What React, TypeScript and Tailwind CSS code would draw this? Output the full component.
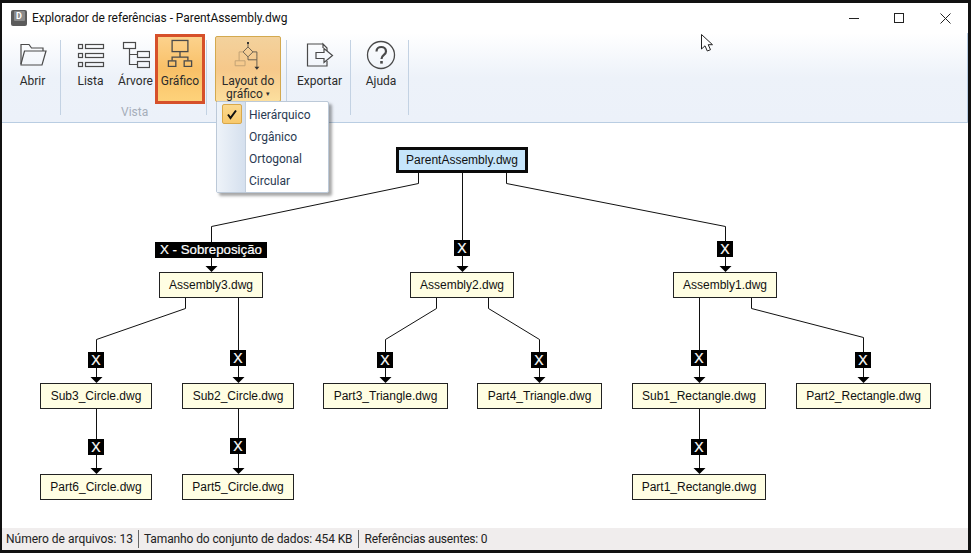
import React from "react";

const OX = 2;
const OY = 123;

type Node = { t: string; x: number; y: number; w: number; root?: boolean };
const nodes: Node[] = [
  { t: "ParentAssembly.dwg", x: 396, y: 147, w: 132, root: true },
  { t: "Assembly3.dwg", x: 159, y: 272, w: 104 },
  { t: "Assembly2.dwg", x: 410, y: 272, w: 104 },
  { t: "Assembly1.dwg", x: 673, y: 272, w: 104 },
  { t: "Sub3_Circle.dwg", x: 40, y: 383, w: 112 },
  { t: "Sub2_Circle.dwg", x: 182, y: 383, w: 112 },
  { t: "Part3_Triangle.dwg", x: 323, y: 383, w: 125 },
  { t: "Part4_Triangle.dwg", x: 477, y: 383, w: 125 },
  { t: "Sub1_Rectangle.dwg", x: 632, y: 383, w: 134 },
  { t: "Part2_Rectangle.dwg", x: 796, y: 383, w: 135 },
  { t: "Part6_Circle.dwg", x: 40, y: 474, w: 112 },
  { t: "Part5_Circle.dwg", x: 182, y: 474, w: 112 },
  { t: "Part1_Rectangle.dwg", x: 632, y: 474, w: 134 },
];

const edges: number[][][] = [
  [[418.5, 173], [418.5, 183.5], [211.5, 226.5], [211.5, 267]],
  [[462.5, 173], [462.5, 267]],
  [[506.5, 173], [506.5, 183.5], [725.5, 226.5], [725.5, 267]],
  [[185.5, 298], [185.5, 308.5], [96.5, 339.5], [96.5, 378]],
  [[238.5, 298], [238.5, 378]],
  [[436.5, 298], [436.5, 308.5], [385.5, 339.5], [385.5, 378]],
  [[488.5, 298], [488.5, 308.5], [539.5, 339.5], [539.5, 378]],
  [[699.5, 298], [699.5, 378]],
  [[751.5, 298], [751.5, 308.5], [863.5, 337.5], [863.5, 378]],
  [[96.5, 409], [96.5, 469]],
  [[238.5, 409], [238.5, 469]],
  [[699.5, 409], [699.5, 469]],
];

const xLabels = [
  [454, 240],
  [717, 241],
  [88, 352],
  [230, 350],
  [377, 352],
  [531, 352],
  [691, 350],
  [855, 352],
  [88, 439],
  [230, 438],
  [691, 439],
];

const S = "#4a4a4a";

function RibbonBtn({ label, w, children }: { label: string; w: string; children: React.ReactNode }) {
  return (
    <div className={`flex flex-col items-center shrink-0 ${w}`}>
      <div className="h-[34px] mt-[5px] flex items-center justify-center">{children}</div>
      <div className="text-[12px] leading-[16px] mt-[1px] text-[#2b2b2b] whitespace-nowrap">{label}</div>
    </div>
  );
}

function Sep({ className }: { className: string }) {
  return <div className={`w-px h-[75px] mt-[7px] bg-[#c3d2e3] shrink-0 ${className}`} />;
}

function TitleIcon() {
  return (
    <div className="w-[16px] h-[16px] rounded-[2px] bg-[#5b5b5b] flex items-start justify-center pt-[1px] shrink-0">
      <div className="w-[11px] h-[10px] bg-[#8b8b8b] rounded-[1px] text-white text-[9px] leading-[10px] font-bold text-center">D</div>
    </div>
  );
}

function Dropdown() {
  const items = ["Hierárquico", "Orgânico", "Ortogonal", "Circular"];
  return (
    <div className="absolute left-[214px] top-[98px] w-[113px] h-[92px] bg-white border border-[#bcc9d8] rounded-[2px] shadow-[3px_3px_3px_rgba(0,0,0,0.35)] z-10 flex">
      <div className="w-[29px] bg-gradient-to-r from-[#eef3f9] to-[#d5e0ee] border-r border-[#c3cfdd] shrink-0" />
      <div className="flex flex-col pl-[3px] pt-[2px]">
        {items.map((t) => (
          <div key={t} className="h-[22px] leading-[22px] text-[12px] text-[#2a3a52] whitespace-nowrap">{t}</div>
        ))}
      </div>
      <div className="absolute left-[5px] top-[2px] w-[20px] h-[20px] rounded-[2px] border border-[#d9a84a] bg-gradient-to-b from-[#fbd98f] to-[#f8c96c] flex items-center justify-center">
        <svg width="12" height="11" viewBox="0 0 12 11"><path d="M2 5.5 L4.5 9 L10 1.5" fill="none" stroke="#111" strokeWidth="2" /></svg>
      </div>
    </div>
  );
}

export default function App() {
  return (
    <div className="w-[971px] h-[553px] flex flex-col bg-white border-t-[3px] border-l-[2px] border-r-[3px] border-b-[3px] border-[#111] overflow-hidden relative font-['Roboto','Open_Sans',sans-serif]">
      {/* Title bar */}
      <div className="h-[30px] flex items-center shrink-0 bg-white">
        <div className="ml-[9px] mr-[5px]"><TitleIcon /></div>
        <div className="text-[12px] text-[#111] whitespace-nowrap tracking-[-0.05px]">Explorador de referências - ParentAssembly.dwg</div>
        <div className="ml-auto flex items-center h-full">
          <svg width="11" height="11" viewBox="0 0 11 11" className="mr-[34px]"><path d="M0 5.5 H10" stroke="#222" strokeWidth="1" /></svg>
          <svg width="11" height="11" viewBox="0 0 11 11" className="mr-[35px]"><rect x="0.5" y="0.5" width="9" height="9" fill="none" stroke="#222" /></svg>
          <svg width="11" height="11" viewBox="0 0 11 11" className="mr-[17px]"><path d="M0.5 0.5 L10.5 10.5 M10.5 0.5 L0.5 10.5" stroke="#222" strokeWidth="1" /></svg>
        </div>
      </div>

      {/* Ribbon */}
      <div className="h-[90px] shrink-0 flex bg-gradient-to-b from-white via-[#edf2f9] via-50% to-[#ecf1f9] border-b border-r border-[#b9cde2] relative">
        <RibbonBtn label="Abrir" w="w-[58px] pl-[3px]">
          <svg width="28" height="26" viewBox="0 0 28 26" fill="none" stroke={S} strokeWidth="1.2">
            <path d="M2 22 V2.5 H10 L12.5 6 H24 V9" />
            <path d="M2 22 L5.5 9 H27 L23 23 H2 Z" />
          </svg>
        </RibbonBtn>
        <Sep className="ml-0" />
        <RibbonBtn label="Lista" w="w-[59px] ml-[0px]">
          <svg width="28" height="26" viewBox="0 0 28 26" fill="none" stroke={S} strokeWidth="1.2">
            <rect x="1.5" y="2.5" width="4" height="4" /><rect x="8.5" y="2.5" width="18" height="4" />
            <rect x="1.5" y="11.5" width="4" height="4" /><rect x="8.5" y="11.5" width="18" height="4" />
            <rect x="1.5" y="20.5" width="4" height="4" /><rect x="8.5" y="20.5" width="18" height="4" />
          </svg>
        </RibbonBtn>
        <RibbonBtn label="Árvore" w="w-[33px] -ml-[1px]">
          <svg width="28" height="28" viewBox="0 0 28 28" fill="none" stroke={S} strokeWidth="1.2">
            <rect x="1.5" y="1.5" width="12" height="6" /><rect x="15.5" y="10.5" width="12" height="6" /><rect x="15.5" y="20.5" width="12" height="6" />
            <path d="M7.5 7.5 V23.5 H15.5 M7.5 13.5 H15.5" />
          </svg>
        </RibbonBtn>
        <div className="w-[50px] h-[70px] ml-[3px] mt-[1px] border-[3px] border-[#d6502a] bg-gradient-to-b from-[#fcd28c] via-[#f9c067] via-50% to-[#fdd27a] shrink-0 flex flex-col items-center">
          <div className="h-[32px] pr-[1px] flex items-center justify-center">
            <svg width="26" height="28" viewBox="0 0 28 30" fill="none" stroke={S} strokeWidth="1.4">
              <rect x="5.5" y="1.5" width="17" height="12" />
              <path d="M14 13.5 V19.5 M5.5 23 V19.5 H22.5 V23" />
              <rect x="1.5" y="23.5" width="8" height="6" /><rect x="18.5" y="23.5" width="8" height="6" />
            </svg>
          </div>
          <div className="text-[12px] leading-[16px] mt-[4px] text-[#2b2b2b] whitespace-nowrap">Gráfico</div>
        </div>
        <Sep className="ml-[1px]" />
        <div className="w-[66px] h-[66px] ml-[8px] mt-[3px] rounded-[2px] border border-[#d3a94f] bg-gradient-to-b from-[#f3d29d] via-[#f6c88a] via-50% to-[#fcdf9e] shrink-0 flex flex-col items-center">
          <svg width="28" height="30" viewBox="0 0 28 30" fill="none" stroke="#6a6050" strokeWidth="1" className="mt-[5px]">
            <path d="M14 1 V5 M9 10 L14 5 L19 10 L14 15 Z M19 10 H23 V15 M14 15 V18 H23 V15 M23 18 V26" />
            <path d="M9 10 H5 V19 M1 19 H11 V24 H1 Z" stroke="#c2a274" />
            <path d="M20.5 25 L23 28 L25.5 25 Z" fill="#333" stroke="none" />
            <rect x="13" y="0" width="2" height="2" fill="#333" stroke="none" />
          </svg>
          <div className="text-[12px] leading-[13px] text-center text-[#2b2b2b] mt-[3px]">
            Layout do<br />gráfico <span className="text-[7px] align-middle">▾</span>
          </div>
        </div>
        <Sep className="ml-[5px]" />
        <RibbonBtn label="Exportar" w="w-[63px] pl-[2px]">
          <svg width="28" height="26" viewBox="0 0 28 26" fill="none" stroke={S} strokeWidth="1.2">
            <path d="M17 6 V2 L21 6 V9 M17 2 H1.5 V24 H21 V19" />
            <path d="M10 10.5 H18 V6.5 L26.5 13.5 L18 20.5 V16.5 H10 Z" />
          </svg>
        </RibbonBtn>
        <Sep className="" />
        <RibbonBtn label="Ajuda" w="w-[57px] pl-[3px]">
          <svg width="30" height="30" viewBox="0 0 30 30" fill="none" stroke={S}>
            <circle cx="15" cy="15" r="13.5" strokeWidth="1.3" />
            <path d="M10.5 11.5 C10.5 5.5 20 5.5 20 11.5 C20 15 15.5 15 15.5 19" strokeWidth="2.2" />
            <rect x="14.2" y="21" width="2.6" height="2.6" fill={S} stroke="none" />
          </svg>
        </RibbonBtn>
        <Sep className="" />
        <div className="absolute left-[119px] top-[71px] text-[12px] leading-[16px] text-[#a6aeb9]">Vista</div>
      </div>

      {/* Graph canvas */}
      <div className="flex-1 relative bg-white">
        <svg width="966" height="405" className="absolute left-0 top-0">
          <g transform={`translate(${-OX} ${-OY})`}>
            {edges.map((e, i) => {
              const last = e[e.length - 1];
              return (
                <g key={i}>
                  <polyline points={e.map((p) => p.join(",")).join(" ")} fill="none" stroke="#111" strokeWidth="1" />
                  <polygon points={`${last[0] - 6},${last[1] - 1} ${last[0] + 6},${last[1] - 1} ${last[0]},${last[1] + 5}`} fill="#000" />
                </g>
              );
            })}
          </g>
        </svg>
        {nodes.map((n) => (
          <div
            key={n.t}
            style={{ left: n.x - OX, top: n.y - OY, width: n.w }}
            className={`absolute h-[26px] flex items-center justify-center text-[12px] text-[#111] font-['Liberation_Sans',sans-serif] whitespace-nowrap ${n.root ? "border-[3px] border-[#0a0a0a] bg-[#c6e5fb]" : "border border-[#222] bg-[#fffee3]"}`}
          >
            {n.t}
          </div>
        ))}
        <div className="absolute left-[153px] top-[119px] w-[112px] h-[16px] bg-black text-white text-[13.3px] leading-[16px] text-center font-['Liberation_Sans',sans-serif] whitespace-nowrap [-webkit-text-stroke:0.2px_white]">X - Sobreposição</div>
        {xLabels.map(([x, y]) => (
          <div
            key={`${x}-${y}`}
            style={{ left: x - OX, top: y - OY }}
            className="absolute w-[16px] h-[16px] bg-black text-white text-[14px] leading-[16px] text-center font-['Liberation_Sans',sans-serif] [-webkit-text-stroke:0.2px_white]"
          >
            X
          </div>
        ))}
      </div>

      {/* Status bar */}
      <div className="h-[22px] shrink-0 bg-[#f0eded] flex items-center text-[12px] text-[#222] whitespace-nowrap">
        <span className="pl-[4px] pr-[5px]">Número de arquivos: 13</span>
        <div className="w-px h-[18px] bg-[#666]" />
        <span className="pl-[5px] pr-[6px] tracking-[-0.11px]">Tamanho do conjunto de dados: 454 KB</span>
        <div className="w-px h-[18px] bg-[#666]" />
        <span className="px-[5px] tracking-[-0.2px]">Referências ausentes: 0</span>
      </div>

      <Dropdown />

      {/* Mouse pointer */}
      <svg width="14" height="20" viewBox="0 0 14 20" className="absolute left-[699px] top-[31px] z-20">
        <path d="M0.5 0.5 V15 L4 11.8 L6.3 17 L9.5 15.7 L7.2 10.7 L11.5 10.7 Z" fill="white" stroke="#222" strokeWidth="1" />
      </svg>
    </div>
  );
}
